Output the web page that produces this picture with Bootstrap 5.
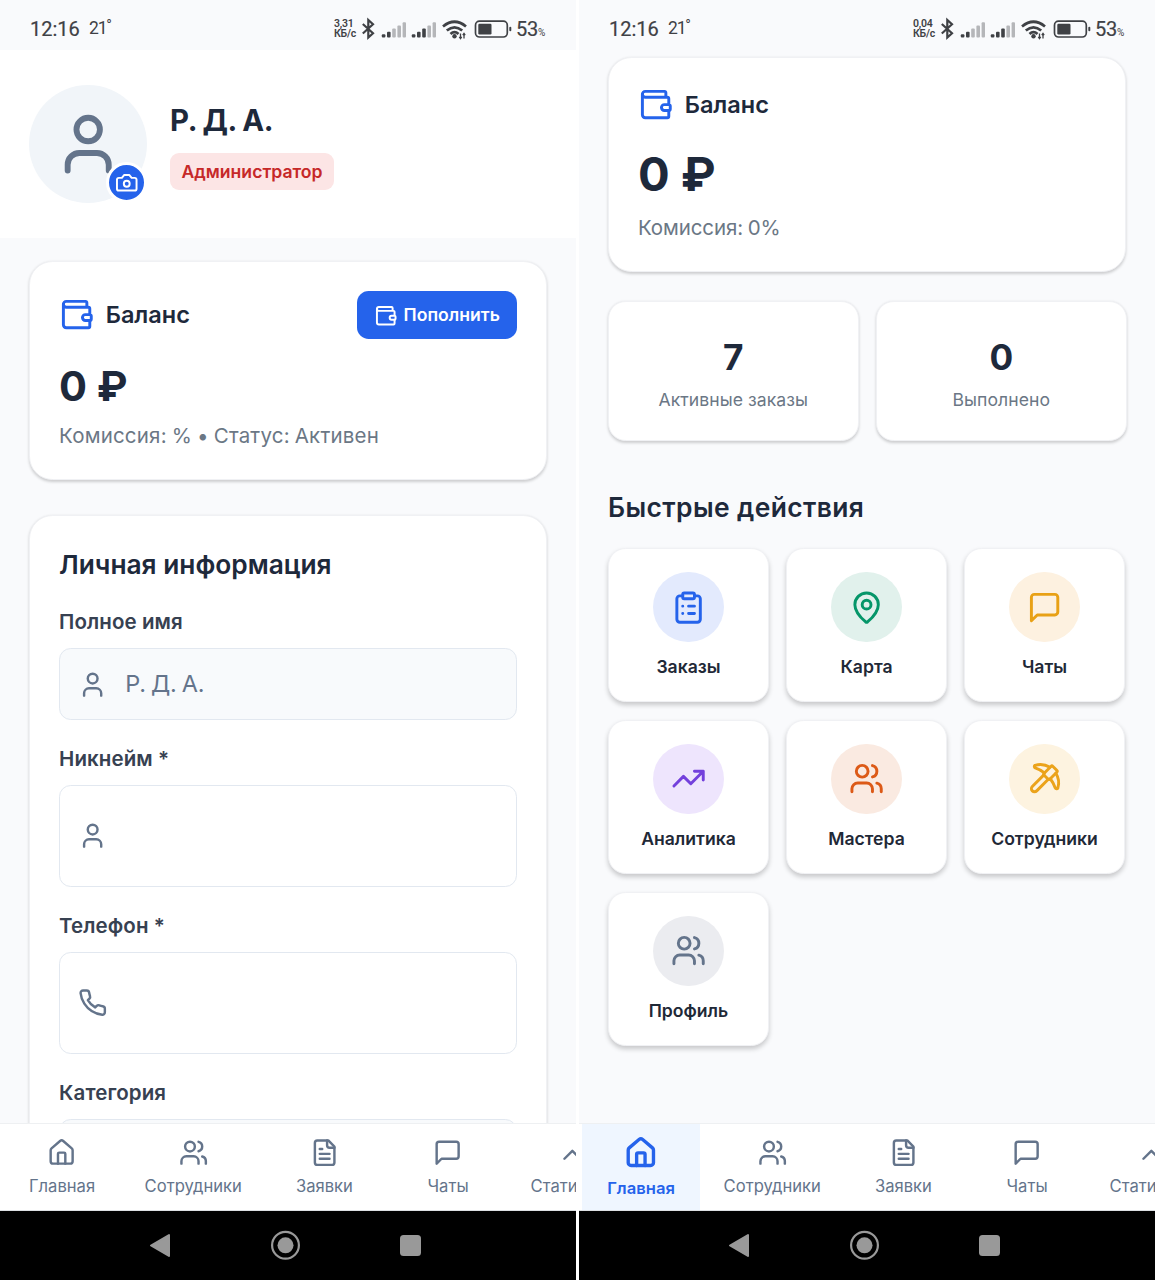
<!DOCTYPE html>
<html lang="ru">
<head>
<meta charset="utf-8">
<meta name="viewport" content="width=device-width, initial-scale=1">
<title>Профиль и главная</title>
<link href="https://cdn.jsdelivr.net/npm/bootstrap@5.3.0/dist/css/bootstrap.min.css" rel="stylesheet">
<style>
body{background:#fff;font-family:Inter,"Open Sans",sans-serif;color:#1e293b;line-height:1.2;overflow:hidden}
.screens{width:1155px;height:1280px;gap:3px}
.phone{width:576px;height:1280px;background:#f9fafc;overflow:hidden}
.ic{fill:none;stroke:currentColor;stroke-width:2;stroke-linecap:round;stroke-linejoin:round;flex:none;display:block}
.i23{width:23.5px;height:23.5px}.i29{width:29.3px;height:29.3px}.i35{width:35.2px;height:35.2px}.i70{width:70.4px;height:70.4px}
.accent{color:#2563eb}
.statusbar{height:50px;padding:8px 30px 0;font-family:Roboto,sans-serif;color:#3f4145;line-height:1;flex:none}
.clock{font-size:20px;width:59px;font-weight:400;-webkit-text-stroke:.2px}
.temp{font-size:17.5px;letter-spacing:-1.2px}
.temp sup{font-size:15px;top:-.3em}
.rate{font-size:10.5px;font-weight:600;width:28px;letter-spacing:-.2px}
.rate span{height:10px;line-height:10px}
.rate span+span{margin-top:.6px}
.pct{font-size:20px;width:30px;letter-spacing:-.3px;-webkit-text-stroke:.2px}
.pct span{font-size:10px;-webkit-text-stroke:0}
.content{height:1073px;overflow:hidden;flex:none}
.profile-head{height:188px;background:#fff;padding:35px 29px;gap:23px}
.avatar-ring{width:118px;height:118px;background:#f1f5f9;color:#64748b}
.camera{right:0;bottom:0;width:41px;height:41px;background:#2563eb;border:3px solid #fff;color:#fff}
.person{font-size:29.3px;font-weight:700;line-height:36px;margin-top:18px;word-spacing:-.5px;letter-spacing:-.3px}
.role{font-size:17.6px;font-weight:600;background:#fce5e5;color:#c62828;height:36.5px;line-height:37.5px;padding:0 11px;border-radius:9px;margin-top:14px;width:164px}
.panel{background:#fff;border:1px solid #f0f1f4;box-shadow:0 1.5px 3px rgba(0,0,0,.18)}
.panel-lg{border-radius:23.5px;width:518px;padding:29px}
.panel-lg.ms-card{margin-left:29px}
.card-profile{margin-top:23px;height:219px}
.card-info{margin-top:35px;height:700px;padding-top:32px}
.card-home{margin-top:7px;height:214.5px}
.title-md{font-size:23.5px;font-weight:600;gap:11.5px}
.sum{font-weight:700}
.sum-md{font-size:41.5px;line-height:50px;margin-top:22px}
.sum-lg{font-size:47px;line-height:57px;margin-top:23px}
.sum-sm{font-size:35.2px;line-height:42px;margin-top:34px}
.muted{color:#6b7785}
.note{font-size:20.5px;line-height:26px;margin-top:12px;letter-spacing:.2px;word-spacing:-1px}
.note-home{margin-top:13px;letter-spacing:-.1px}
.note-sm{font-size:17.6px;line-height:22px;margin-top:11px;letter-spacing:.05px}
.topup{width:160px;height:48px;background:#2563eb;color:#fff;border-radius:11.7px;font-size:17.6px;font-weight:600;gap:6px;padding:1px 0 0}
.h-sec{font-size:26.4px;font-weight:600;margin:0;line-height:34px}
.h-info{margin-bottom:27px;font-size:26.3px}
.h-quick{margin:49.5px 0 24px;letter-spacing:.4px}
.lbl{font-size:20.5px;font-weight:600;color:#374151;line-height:26px;margin:0 0 13px;letter-spacing:.1px}
.field{border:1.4px solid #e2e8f0;border-radius:11.7px;padding:0 18px;gap:18px;font-size:23.5px;color:#64748b;margin-bottom:26.7px;height:101.4px;word-spacing:-1px;letter-spacing:-.3px}
.field-locked{background:#f8fafc}
.field-line{height:71.5px;padding-top:1px}
.tabs{height:88px;background:#fff;border-top:1px solid #eef0f2;border-bottom:1px solid #dde0e3;padding-left:3.4px;gap:6.3px;flex:none;overflow:hidden}
.tab{flex:none;min-width:117.3px;height:87px;padding:13.5px 17.6px 0;font-size:16.6px;color:#64748b}
.tab span{margin-top:8px;line-height:22px}
.tab-on{background:#eff6ff;color:#2563eb;font-weight:600;padding-top:12px;width:117.3px;font-size:16.6px}
.tab-on span{margin-top:7px}
.tab-on svg{width:33.7px;height:33.7px;stroke-width:2.4}
.sysbar{height:69px;background:#000}
.sysbar svg{display:block}
.home-body{padding-left:29px}
.stats{gap:17.5px;margin-top:29px}
.stat{border-radius:17.6px;width:250.5px;height:140px}
.tiles{display:grid;grid-template-columns:repeat(3,161px);column-gap:17px;row-gap:17.6px}
.tile{border-radius:17.6px;height:154.3px;padding-top:23px;font-size:17.6px;font-weight:600;color:#1f2937;box-shadow:0 3px 5px rgba(0,0,0,.2)}
.disc{width:70.4px;height:70.4px;margin:0 0 14px}
.c-blue{background:#e3eafd;color:#2563eb}.c-green{background:#e1f1ec;color:#059669}.c-amber{background:#fdf1e0;color:#e8a116}
.c-violet{background:#eee5fd;color:#7340dc}.c-orange{background:#faeae1;color:#dc5a17}.c-gold{background:#fdf3e0;color:#eba31b}.c-gray{background:#ebecf0;color:#64748b}
</style>
<script src="https://cdn.jsdelivr.net/npm/bootstrap@5.3.0/dist/js/bootstrap.bundle.min.js"></script>
</head>
<body>
<svg class="d-none">
<symbol id="user" viewBox="0 0 24 24"><path d="M19 21v-2a4 4 0 0 0-4-4H9a4 4 0 0 0-4 4v2"/><circle cx="12" cy="7" r="4"/></symbol>
<symbol id="users" viewBox="0 0 24 24"><path d="M16 21v-2a4 4 0 0 0-4-4H6a4 4 0 0 0-4 4v2"/><circle cx="9" cy="7" r="4"/><path d="M22 21v-2a4 4 0 0 0-3-3.87M16 3.13a4 4 0 0 1 0 7.75"/></symbol>
<symbol id="camera" viewBox="0 0 24 24"><path d="M14.5 4h-5L7 7H4a2 2 0 0 0-2 2v9a2 2 0 0 0 2 2h16a2 2 0 0 0 2-2V9a2 2 0 0 0-2-2h-3z"/><circle cx="12" cy="13" r="3"/></symbol>
<symbol id="wallet" viewBox="0 0 24 24"><path d="M19 7V4a1 1 0 0 0-1-1H5a2 2 0 0 0 0 4h15a1 1 0 0 1 1 1v4h-3a2 2 0 0 0 0 4h3a1 1 0 0 0 1-1v-2a1 1 0 0 0-1-1"/><path d="M3 5v14a2 2 0 0 0 2 2h15a1 1 0 0 0 1-1v-4"/></symbol>
<symbol id="phone" viewBox="0 0 24 24"><path d="M22 16.92v3a2 2 0 0 1-2.18 2 19.79 19.79 0 0 1-8.63-3.07 19.5 19.5 0 0 1-6-6 19.79 19.79 0 0 1-3.07-8.67A2 2 0 0 1 4.11 2h3a2 2 0 0 1 2 1.72 12.84 12.84 0 0 0 .7 2.81 2 2 0 0 1-.45 2.11L8.09 9.91a16 16 0 0 0 6 6l1.27-1.27a2 2 0 0 1 2.11-.45 12.84 12.84 0 0 0 2.81.7A2 2 0 0 1 22 16.92z"/></symbol>
<symbol id="house" viewBox="0 0 24 24"><path d="M15 21v-8a1 1 0 0 0-1-1h-4a1 1 0 0 0-1 1v8"/><path d="M3 10a2 2 0 0 1 .709-1.528l7-5.999a2 2 0 0 1 2.582 0l7 5.999A2 2 0 0 1 21 10v9a2 2 0 0 1-2 2H5a2 2 0 0 1-2-2z"/></symbol>
<symbol id="file" viewBox="0 0 24 24"><path d="M15 2H6a2 2 0 0 0-2 2v16a2 2 0 0 0 2 2h12a2 2 0 0 0 2-2V7Z"/><path d="M14 2v4a2 2 0 0 0 2 2h4M10 9H8M16 13H8M16 17H8"/></symbol>
<symbol id="chat" viewBox="0 0 24 24"><path d="M21 15a2 2 0 0 1-2 2H7l-4 4V5a2 2 0 0 1 2-2h14a2 2 0 0 1 2 2z"/></symbol>
<symbol id="list" viewBox="0 0 24 24"><rect x="8" y="2" width="8" height="4" rx="1"/><path d="M16 4h2a2 2 0 0 1 2 2v14a2 2 0 0 1-2 2H6a2 2 0 0 1-2-2V6a2 2 0 0 1 2-2h2M12 11h4M12 16h4M8 11h.01M8 16h.01"/></symbol>
<symbol id="pin" viewBox="0 0 24 24"><path d="M20 10c0 4.993-5.539 10.193-7.399 11.799a1 1 0 0 1-1.202 0C9.539 20.193 4 14.993 4 10a8 8 0 0 1 16 0"/><circle cx="12" cy="10" r="3"/></symbol>
<symbol id="trend" viewBox="0 0 24 24"><path d="M22 7 13.5 15.5 8.5 10.5 2 17M16 7h6v6"/></symbol>
<symbol id="pickaxe" viewBox="0 0 24 24"><path d="M14.531 12.469 6.619 20.38a1 1 0 1 1-3-3l7.912-7.912"/><path d="M15.686 4.314A12.5 12.5 0 0 0 5.461 2.958 1 1 0 0 0 5.58 4.71a22 22 0 0 1 6.318 3.393"/><path d="M17.7 3.7a1 1 0 0 0-1.4 0l-4.6 4.6a1 1 0 0 0 0 1.4l2.6 2.6a1 1 0 0 0 1.4 0l4.6-4.6a1 1 0 0 0 0-1.4z"/><path d="M19.686 8.314a12.501 12.501 0 0 1 1.356 10.225 1 1 0 0 1-1.751-.119 22 22 0 0 0-3.393-6.319"/></symbol>
<symbol id="sysicons" viewBox="0 0 154 24">
<path d="M.8 7 11 16.300 6.300 20.500V3L11 7.300.8 16.500" fill="none" stroke="#3f4145" stroke-width="2.200"/>
<g fill="#3f4145"><rect x="19.800" y="17.200" width="3.600" height="3.300" rx="1"/><rect x="25" y="14.800" width="3.600" height="5.700" rx="1"/></g>
<g fill="#b5b6b9"><rect x="30.200" y="11.500" width="3.600" height="9" rx="1"/><rect x="35.400" y="8.500" width="3.600" height="12" rx="1"/><rect x="40.600" y="5.200" width="3.400" height="15.300" rx="1"/></g>
<g fill="#3f4145"><rect x="49.800" y="17.200" width="3.600" height="3.300" rx="1"/><rect x="55" y="14.800" width="3.600" height="5.700" rx="1"/><rect x="60.200" y="11.500" width="3.600" height="9" rx="1"/></g>
<g fill="#b5b6b9"><rect x="65.400" y="8.500" width="3.600" height="12" rx="1"/><rect x="70.600" y="5.200" width="3.400" height="15.300" rx="1"/></g>
<g fill="none" stroke="#3f4145" stroke-width="2.700"><path d="M81 9.500Q92.500 0 104 9.500M84.800 13.600Q92.500 7 100.200 13.600M88.500 17Q92.500 13.200 96.500 17"/></g>
<circle cx="92.500" cy="19.300" r="2.200" fill="#3f4145"/><path d="M98.500 16.500v5M97.300 19.800l1.200 1.700 1.200-1.700M102 21.500v-5M100.800 18.200l1.200-1.700 1.200 1.700" stroke="#3f4145" stroke-width="1.300" fill="none"/>
<rect x="113.500" y="4.200" width="31.800" height="15.800" rx="4" fill="none" stroke="#3f4145" stroke-width="1.700"/><rect x="116.300" y="6.700" width="13.200" height="10.800" rx="1.200" fill="#3f4145"/><rect x="147.300" y="9.800" width="2" height="4.500" rx="1" fill="#3f4145"/>
</symbol>
<symbol id="syskeys" viewBox="0 0 576 69"><g fill="#999"><path d="M151 34.500 169 24v21z" stroke="#999" stroke-width="2" stroke-linejoin="round"/><circle cx="285.500" cy="34.300" r="13.400" fill="none" stroke="#999" stroke-width="2.200"/><circle cx="285.500" cy="34.300" r="8"/><rect x="400" y="24" width="21" height="21" rx="3.500"/></g></symbol>
</svg>

<main class="screens d-flex">
<section class="phone d-flex flex-column">
  <header class="statusbar d-flex align-items-center">
    <span class="clock">12:16</span><span class="temp">21<sup>°</sup></span>
    <div class="rate ms-auto d-flex flex-column"><span>3,31</span><span>КБ/с</span></div><svg width="154" height="24"><use href="#sysicons"/></svg><span class="pct text-nowrap">53<span>%</span></span>
  </header>
  <div class="content">
    <div class="profile-head d-flex">
      <div class="avatar-ring rounded-circle position-relative d-flex align-items-center justify-content-center">
        <svg class="ic i70"><use href="#user"/></svg>
        <span class="camera position-absolute rounded-circle d-flex align-items-center justify-content-center"><svg class="ic i23"><use href="#camera"/></svg></span>
      </div>
      <div><div class="person">Р. Д. А.</div><div class="role text-center">Администратор</div></div>
    </div>
    <div class="panel panel-lg ms-card card-profile">
      <div class="d-flex align-items-center justify-content-between">
        <div class="title-md d-flex align-items-center"><svg class="ic i35 accent"><use href="#wallet"/></svg>Баланс</div>
        <button class="btn topup d-flex align-items-center justify-content-center"><svg class="ic i23"><use href="#wallet"/></svg>Пополнить</button>
      </div>
      <div class="sum sum-md">0 ₽</div>
      <div class="muted note">Комиссия: % • Статус: Активен</div>
    </div>
    <div class="panel panel-lg ms-card card-info">
      <h2 class="h-sec h-info">Личная информация</h2>
      <div class="lbl">Полное имя</div>
      <div class="field field-locked field-line d-flex align-items-center"><svg class="ic i29"><use href="#user"/></svg>Р. Д. А.</div>
      <div class="lbl">Никнейм *</div>
      <div class="field d-flex align-items-center"><svg class="ic i29"><use href="#user"/></svg></div>
      <div class="lbl">Телефон *</div>
      <div class="field d-flex align-items-center"><svg class="ic i29"><use href="#phone"/></svg></div>
      <div class="lbl">Категория</div>
      <div class="field field-locked"></div>
    </div>
  </div>
  <nav class="tabs d-flex">
    <div class="tab d-flex flex-column align-items-center"><svg class="ic i29"><use href="#house"/></svg><span>Главная</span></div>
    <div class="tab d-flex flex-column align-items-center"><svg class="ic i29"><use href="#users"/></svg><span>Сотрудники</span></div>
    <div class="tab d-flex flex-column align-items-center"><svg class="ic i29"><use href="#file"/></svg><span>Заявки</span></div>
    <div class="tab d-flex flex-column align-items-center"><svg class="ic i29"><use href="#chat"/></svg><span>Чаты</span></div>
    <div class="tab d-flex flex-column align-items-center"><svg class="ic i29"><use href="#trend"/></svg><span>Статистика</span></div>
  </nav>
  <div class="sysbar"><svg width="576" height="69"><use href="#syskeys"/></svg></div>
</section>

<section class="phone d-flex flex-column">
  <header class="statusbar d-flex align-items-center">
    <span class="clock">12:16</span><span class="temp">21<sup>°</sup></span>
    <div class="rate ms-auto d-flex flex-column"><span>0,04</span><span>КБ/с</span></div><svg width="154" height="24"><use href="#sysicons"/></svg><span class="pct text-nowrap">53<span>%</span></span>
  </header>
  <div class="content">
    <div class="panel panel-lg ms-card card-home">
      <div class="title-md d-flex align-items-center"><svg class="ic i35 accent"><use href="#wallet"/></svg>Баланс</div>
      <div class="sum sum-lg">0 ₽</div>
      <div class="muted note note-home">Комиссия: 0%</div>
    </div>
    <div class="home-body">
    <div class="d-flex stats">
      <div class="panel stat flex-shrink-0 text-center"><div class="sum sum-sm">7</div><div class="muted note-sm">Активные заказы</div></div>
      <div class="panel stat flex-shrink-0 text-center"><div class="sum sum-sm">0</div><div class="muted note-sm">Выполнено</div></div>
    </div>
    <h2 class="h-sec h-quick">Быстрые действия</h2>
    <div class="tiles">
      <div class="panel tile d-flex flex-column align-items-center"><div class="disc c-blue rounded-circle d-flex align-items-center justify-content-center"><svg class="ic i35"><use href="#list"/></svg></div>Заказы</div>
      <div class="panel tile d-flex flex-column align-items-center"><div class="disc c-green rounded-circle d-flex align-items-center justify-content-center"><svg class="ic i35"><use href="#pin"/></svg></div>Карта</div>
      <div class="panel tile d-flex flex-column align-items-center"><div class="disc c-amber rounded-circle d-flex align-items-center justify-content-center"><svg class="ic i35"><use href="#chat"/></svg></div>Чаты</div>
      <div class="panel tile d-flex flex-column align-items-center"><div class="disc c-violet rounded-circle d-flex align-items-center justify-content-center"><svg class="ic i35"><use href="#trend"/></svg></div>Аналитика</div>
      <div class="panel tile d-flex flex-column align-items-center"><div class="disc c-orange rounded-circle d-flex align-items-center justify-content-center"><svg class="ic i35"><use href="#users"/></svg></div>Мастера</div>
      <div class="panel tile d-flex flex-column align-items-center"><div class="disc c-gold rounded-circle d-flex align-items-center justify-content-center"><svg class="ic i35"><use href="#pickaxe"/></svg></div>Сотрудники</div>
      <div class="panel tile d-flex flex-column align-items-center"><div class="disc c-gray rounded-circle d-flex align-items-center justify-content-center"><svg class="ic i35"><use href="#users"/></svg></div>Профиль</div>
    </div>
    </div>
  </div>
  <nav class="tabs d-flex">
    <div class="tab tab-on d-flex flex-column align-items-center"><svg class="ic"><use href="#house"/></svg><span>Главная</span></div>
    <div class="tab d-flex flex-column align-items-center"><svg class="ic i29"><use href="#users"/></svg><span>Сотрудники</span></div>
    <div class="tab d-flex flex-column align-items-center"><svg class="ic i29"><use href="#file"/></svg><span>Заявки</span></div>
    <div class="tab d-flex flex-column align-items-center"><svg class="ic i29"><use href="#chat"/></svg><span>Чаты</span></div>
    <div class="tab d-flex flex-column align-items-center"><svg class="ic i29"><use href="#trend"/></svg><span>Статистика</span></div>
  </nav>
  <div class="sysbar"><svg width="576" height="69"><use href="#syskeys"/></svg></div>
</section>
</main>
</body>
</html>
